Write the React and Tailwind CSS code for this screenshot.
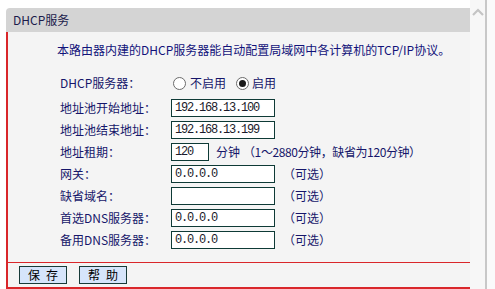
import React from "react";

const cjk = { fontFamily: '"Noto Sans CJK SC", "Noto Sans", sans-serif' };
const mono = { fontFamily: '"Liberation Mono", "DejaVu Sans Mono", monospace' };

function Radio({ checked }) {
  return (
    <span className="inline-flex h-[13px] w-[13px] items-center justify-center rounded-full border border-[#6b6b6b] bg-white">
      {checked && <span className="h-[7px] w-[7px] rounded-full bg-[#1a1a1a]" />}
    </span>
  );
}

function Input({ value, w = "w-[104px]" }) {
  return (
    <div
      className={`flex h-[18px] ${w} items-center border border-[#0e3a36] bg-white pl-[3px] text-[12px] tracking-[-1.2px] text-[#1a1a2a]`}
      style={mono}
    >
      {value}
    </div>
  );
}

function Row({ label, children }) {
  return (
    <div className="flex h-[22px] items-center">
      <div className="w-[163px] shrink-0 pl-[52px] text-[12px] text-[#16166a] whitespace-nowrap">
        {label}
      </div>
      {children}
    </div>
  );
}

function Opt() {
  return (
    <span className="ml-[8px] text-[12px] text-[#16166a]">
      （可选）
    </span>
  );
}

export default function App() {
  return (
    <div className="flex h-[289px] w-[495px] overflow-hidden bg-white" style={cjk}>
      <div className="flex w-[470px] flex-col pt-[8px]">
        <div className="ml-[6px] flex h-[24px] items-center rounded-tl-[4px] bg-[#d4d4d4] pl-[7px] text-[12px] text-[#1b1b4b]">
          DHCP服务
        </div>
        <div className="ml-[6px] flex flex-1 flex-col border-l-2 border-[#d9262a] bg-[#f4f4f4]">
          <div className="mt-[9px] h-[18px] pl-[49px] text-[12px] leading-[18px] text-[#12127a] whitespace-nowrap">
            本路由器内建的DHCP服务器能自动配置局域网中各计算机的TCP/IP协议。
          </div>
          <div className="mt-[13px] flex flex-col">
            <div className="mb-[3px] flex h-[22px] items-center">
              <div className="w-[163px] shrink-0 pl-[52px] text-[12px] text-[#16166a] whitespace-nowrap">
                DHCP服务器：
              </div>
              <div className="ml-[2px] flex items-center gap-[4px] text-[12px] text-[#16166a]">
                <Radio />
                <span>不启用</span>
              </div>
              <div className="ml-[10px] flex items-center gap-[3px] text-[12px] text-[#16166a]">
                <Radio checked />
                <span>启用</span>
              </div>
            </div>
            <Row label="地址池开始地址：">
              <Input value="192.168.13.100" />
            </Row>
            <Row label="地址池结束地址：">
              <Input value="192.168.13.199" />
            </Row>
            <Row label="地址租期：">
              <Input value="120" w="w-[38px]" />
              <span className="ml-[7px] text-[12px] text-[#16166a]">分钟</span>
              <span className="ml-[3px] text-[12px] tracking-[-0.4px] text-[#16166a] whitespace-nowrap">
                （1～2880分钟，缺省为120分钟）
              </span>
            </Row>
            <Row label="网关：">
              <Input value="0.0.0.0" />
              <Opt />
            </Row>
            <Row label="缺省域名：">
              <Input value="" />
              <Opt />
            </Row>
            <Row label="首选DNS服务器：">
              <Input value="0.0.0.0" />
              <Opt />
            </Row>
            <Row label="备用DNS服务器：">
              <Input value="0.0.0.0" />
              <Opt />
            </Row>
          </div>
          <div className="mt-[11px] border-t border-[#d9262a]" />
          <div className="flex h-[26px] items-center gap-[12px] border-b-2 border-[#d9262a] pl-[11px]">
            <button className="flex h-[18px] w-[48px] items-center justify-center border border-[#173a38] bg-[#d6e5fb] text-[12px] tracking-[6px] text-black">
              <span className="pl-[6px]">保存</span>
            </button>
            <button className="flex h-[18px] w-[48px] items-center justify-center border border-[#173a38] bg-[#d6e5fb] text-[12px] tracking-[6px] text-black">
              <span className="pl-[6px]">帮助</span>
            </button>
          </div>
        </div>
      </div>
      <div className="flex w-[25px] bg-[#f7f7f7]">
        <div className="flex w-[15px] justify-center pt-[8px]">
          <svg width="12" height="8" viewBox="0 0 12 8">
            <path d="M1 7 L6 2 L11 7" fill="none" stroke="#c4c4c4" strokeWidth="2.2" />
          </svg>
        </div>
        <div className="w-[2px] bg-[#c8c8c8]" />
        <div className="flex-1 bg-[#fafafa]" />
      </div>
    </div>
  );
}
